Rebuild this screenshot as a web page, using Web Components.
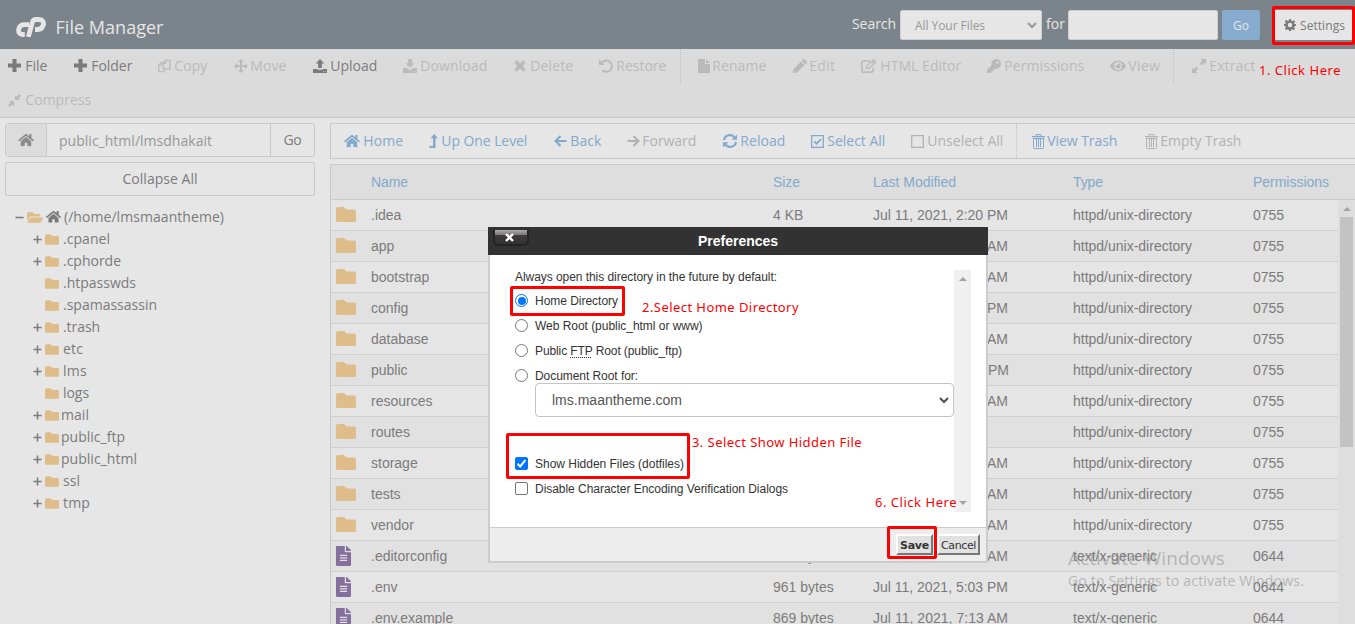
<!DOCTYPE html>
<html lang="en">
<head>
<meta charset="utf-8">
<title>File Manager</title>
<style>
html,body{margin:0;height:100%;overflow:hidden;background:#e6e6e6}
body{font-family:"Open Sans","Noto Sans",sans-serif;font-size:14px;color:#7b7b7b}
</style>
</head>
<body>
<file-manager></file-manager>
<script>
const define = (name, css, html, extra) => customElements.define(name, class extends HTMLElement {
  connectedCallback() {
    if (this.shadowRoot) return;
    const root = this.attachShadow({mode: 'open'});
    const body = typeof html === 'function' ? html(this) : html;
    root.innerHTML = `<style>*{box-sizing:border-box}${css}</style>${body}`;
    if (extra) extra(this, root);
  }
});

/* Icons: [viewBox, markup] */
const S = (w, d) => `<path fill="none" stroke="currentColor" stroke-width="${w}" d="${d}"/>`;
const P = d => `<path fill-rule="evenodd" d="${d}"/>`;
const ICONS = {
  plus: ['0 0 14 14', P('M4.500 0h4v4.500H13v4H8.500V13h-4V8.500H0v-4h4.500z')],
  tplus: ['0 0 10 10', S(1.7, 'M5 .5v9M.5 5h9')],
  tminus: ['0 0 10 10', S(1.7, 'M.5 5h9')],
  copy: ['0 0 14 14', S(1.3, 'M5.3 3.4H3.2L.8 6v7.2h6V11M3.3 3.4V6H.8M8.3.8H13v9.4H5.6V3.6L8.3.8v3H5.6')],
  move: ['0 0 14 14', P('M7 0l3 3H8v3h3V4l3 3-3 3V8H8v3h2l-3 3-3-3h2V8H3v2L0 7l3-3v2h3V3H4z')],
  upload: ['0 0 14 14', P('M7 0l4.3 4.5H8.8V9H5.2V4.5H2.7zM0 10h4.4v.8h5.2V10H14v4H0zM10 12.2h.8v.9H10zM12 12.2h.8v.9H12z')],
  download: ['0 0 14 14', P('M5.2 0h3.6v4.3h2.6L7 8.8 2.6 4.3h2.6zM0 9h3.8L7 11.8 10.200 9H14v5H0zM10 12.200h.8v.9H10zM12 12.200h.8v.9H12z')],
  times: ['0 0 12 12', S(3.4, 'M1.5 1.500l9 9M10.500 1.500l-9 9')],
  undo: ['0 0 14 14', S(2, 'M2.300 4.600A5.600 5.600 0 1 1 3.300 11.200') + P('M0 .3V6h5.700z')],
  file: ['0 0 12 14', P('M1 0h6v5h5v8.500q0 .5-.5.5H1q-1 0-1-.5V.7Q0 0 1 0zM8 0l4 4H8z')],
  pencil: ['0 0 512 512', P('M497.9 142.1l-46.1 46.1c-4.7 4.7-12.3 4.7-17 0l-111-111c-4.7-4.7-4.7-12.3 0-17l46.1-46.1c18.7-18.7 49.1-18.7 67.9 0l60.1 60.1c18.8 18.7 18.8 49.1 0 67.9zM284.2 99.8L21.6 362.4.4 483.9c-2.9 16.4 11.4 30.6 27.8 27.8l121.5-21.3 262.6-262.6c4.7-4.7 4.7-12.3 0-17l-111-111c-4.8-4.7-12.4-4.7-17.1 0z')],
  edit: ['0 0 16 14', S(1.6, 'M9 2H2.300Q.9 2 .9 3.400v8.300q0 1.400 1.400 1.400h8.400q1.400 0 1.400-1.400V9') + S(1.4, 'M5.500 9.500l.4-2.700L12.400.9l2.300 2.300-6.300 6zM11 2.500l2.200 2.200')],
  key: ['0 0 512 512', P('M512 176.001C512 273.203 433.202 352 336 352c-11.22 0-22.19-1.062-32.827-3.069l-24.012 27.014A23.999 23.999 0 0 1 261.223 384H224v40c0 13.255-10.745 24-24 24h-40v40c0 13.255-10.745 24-24 24H24c-13.255 0-24-10.745-24-24v-78.059c0-6.365 2.529-12.47 7.029-16.971l161.802-161.802C163.108 213.814 160 195.271 160 176 160 78.798 238.797.001 335.999 0 433.488-.001 512 78.511 512 176.001zM336 128c0 26.51 21.49 48 48 48s48-21.49 48-48-21.49-48-48-48-48 21.49-48 48z')],
  eye: ['0 0 576 512', P('M572.52 241.4C518.29 135.59 410.93 64 288 64S57.68 135.64 3.48 241.41a32.35 32.35 0 0 0 0 29.19C57.71 376.41 165.07 448 288 448s230.32-71.64 284.52-177.41a32.35 32.35 0 0 0 0-29.19zM288 400a144 144 0 1 1 144-144 143.93 143.93 0 0 1-144 144zm0-240a95.31 95.31 0 0 0-25.31 3.79 47.85 47.85 0 0 1-66.9 66.9A95.78 95.78 0 1 0 288 160z')],
  expand: ['0 0 14 14', P('M8.500 0H14v5.500l-1.800-1.800L9.500 6.400 7.600 4.500l2.700-2.700zM5.500 14H0V8.500l1.800 1.800 2.700-2.700 1.900 1.900-2.700 2.700z')],
  compress: ['0 0 14 14', P('M7.600 6.400V1.200l1.700 1.700L12.200 0 14 1.800l-2.900 2.900 1.700 1.700zM6.400 7.600v5.200l-1.700-1.700L1.800 14 0 12.200l2.900-2.900-1.700-1.700z')],
  home: ['0 0 576 512', P('M280.37 148.26L96 300.11V464a16 16 0 0 0 16 16l112.06-.29a16 16 0 0 0 15.92-16V368a16 16 0 0 1 16-16h64a16 16 0 0 1 16 16v95.64a16 16 0 0 0 16 16.05L464 480a16 16 0 0 0 16-16V300L295.67 148.26a12.19 12.19 0 0 0-15.3 0zM571.6 251.47L488 182.56V44.05a12 12 0 0 0-12-12h-56a12 12 0 0 0-12 12v72.61L318.47 43a48 48 0 0 0-61 0L4.34 251.47a12 12 0 0 0-1.6 16.9l25.5 31A12 12 0 0 0 45.15 301l235.22-193.74a12.19 12.19 0 0 1 15.3 0L530.9 301a12 12 0 0 0 16.9-1.6l25.5-31a12 12 0 0 0-1.7-16.93z')],
  levelup: ['0 0 9 14', P('M5.200 0L9 4.200H6.500V14H.8L0 12h4V4.200H1.500z')],
  left: ['0 0 13 12', S(2.200, 'M12.500 6H2M6.500 1L1.600 6l4.900 5')],
  right: ['0 0 13 12', S(2.200, 'M.5 6H11M6.500 1l4.900 5-4.900 5')],
  sync: ['0 0 14 14', S(2.200, 'M1 6.200A6 6 0 0 1 11.800 3.600M13 7.800A6 6 0 0 1 2.200 10.400') + P('M14 .5v5.300H8.700zM0 13.500V8.200h5.300z')],
  checked: ['0 0 13 13', S(1.3, 'M.7.7h11.600v11.600H.7z') + S(1.7, 'M3.200 6.300l2.400 2.400L10 4.200')],
  square: ['0 0 13 13', S(1.3, 'M.7.7h11.600v11.600H.7z')],
  trash: ['0 0 13 15', S(1, 'M4 2V.6h5V2M1.500 4.500v9q0 1 1 1h8q1 0 1-1v-9M4.500 5v8M6.500 5v8M8.500 5v8') + P('M0 2h13v1.300H0zM1 4h11v1H1z')],
  cog: ['0 0 14 14', P('M5.900 0h2.200l.4 2 1.200.5 1.800-1.200 1.500 1.500-1.200 1.800.5 1.300 1.700.3v1.900l-1.800.5-.5 1.200 1.300 1.800-1.600 1.500-1.700-1.200-1.200.5L8.100 14H5.900l-.4-1.600-1.200-.5-1.800 1.200L1 11.500l1.200-1.700-.5-1.200L0 8.100V5.900l1.700-.4.5-1.200L1 2.600 2.500 1l1.800 1.300L5.500 2zM7 4.400A2.600 2.600 0 1 0 7 9.600 2.600 2.600 0 0 0 7 4.400z')],
  folder: ['0 64 512 384', P('M464 128H272l-64-64H48C21.49 64 0 85.49 0 112v288c0 26.51 21.49 48 48 48h416c26.51 0 48-21.49 48-48V176c0-26.51-21.49-48-48-48z')],
  folderopen: ['0 64 576 384', P('M572.694 292.093L500.27 416.248A63.997 63.997 0 0 1 444.989 448H45.025c-18.523 0-30.064-20.093-20.731-36.093l72.424-124.155A64 64 0 0 1 152 256h399.964c18.523 0 30.064 20.093 20.73 36.093zM152 224h328v-48c0-26.51-21.49-48-48-48H272l-64-64H48C21.49 64 0 85.49 0 112v278.046l69.077-118.418C86.214 242.25 117.989 224 152 224z')],
  filealt: ['0 0 384 512', P('M224 136V0H24C10.7 0 0 10.7 0 24v464c0 13.3 10.7 24 24 24h336c13.3 0 24-10.7 24-24V160H248c-13.2 0-24-10.8-24-24zm64 236c0 6.600-5.400 12-12 12H108c-6.600 0-12-5.400-12-12v-8c0-6.600 5.400-12 12-12h168c6.600 0 12 5.400 12 12v8zm0-64c0 6.600-5.400 12-12 12H108c-6.600 0-12-5.400-12-12v-8c0-6.600 5.400-12 12-12h168c6.600 0 12 5.400 12 12v8zm0-72v8c0 6.600-5.400 12-12 12H108c-6.600 0-12-5.400-12-12v-8c0-6.600 5.400-12 12-12h168c6.600 0 12 5.400 12 12zm96-114.100v6.100H256V0h6.100c6.400 0 12.500 2.500 17 7l97.900 98c4.500 4.500 7 10.600 7 16.900z')],
  chevron: ['0 0 10 7', S(2.200, 'M1 1l4 4 4-4')],
  logo: ['0 0 30 20', S(4.8, 'M13.200 7.600H8.200Q4.200 7.600 2.900 11.500Q1.600 16.700 6.200 17.500H8.800') + S(4.8, 'M12.300 20L16.200 5.800Q17 2.500 20 2.500h3.200q5.200.6 4.100 5.500-1.300 4.500-5.500 4.500h-2.800')],
  up: ['0 0 8 4', P('M0 4l4-4 4 4z')],
  down: ['0 0 8 4', P('M0 0l4 4 4-4z')]
};
define('ui-icon', `:host{display:inline-flex;flex:none}svg{display:block;fill:currentColor}`, el => {
  const [vb, m] = ICONS[el.getAttribute('name')];
  return `<svg width="${el.getAttribute('w')}" height="${el.getAttribute('h')}" viewBox="${vb}">${m}</svg>`;
});

/* Single line of text, tracked to an optional target width */
define('ui-text', `:host{display:inline-block;white-space:pre;flex:none}`, `<span><slot></slot></span>`, (el, root) => {
  const w = +el.getAttribute('w');
  if (!w) return;
  const have = root.querySelector('span').getBoundingClientRect().width;
  el.style.letterSpacing = ((w - have) / el.textContent.length).toFixed(4) + 'px';
});

const icon = (n, w, h) => `<ui-icon name="${n}" w="${w}" h="${h}"></ui-icon>`;
const text = (t, w = 0) => `<ui-text w="${w}">${t}</ui-text>`;

define('tool-item', `:host{display:flex;align-items:center;flex:none;height:100%;color:#7b7b7b}
:host([off]){color:#bababa}:host([blue]){color:#83a9cc}:host([blue][off]){color:#b2b2b2}
:host([sep]){border-right:1px dotted #c0c0c0}
ui-text{margin:-2px 0 0 -.7px}
.i{flex:none;display:flex}`, el => {
  const g = k => el.getAttribute(k);
  return `<span class="i" style="width:${g('gap')}px">${icon(g('icon'), g('iw'), g('ih'))}</span>${text(g('label'), g('tw'))}`;
}, el => { el.style.width = el.getAttribute('width') + 'px'; });

/* [icon, iw, ih, icon x, text x, text end, label, flags, item end] */
const tools = (list) => list.map(([n, iw, ih, x, tx, te, label, flags, end]) =>
  `<tool-item icon="${n}" iw="${iw}" ih="${ih}" gap="${tx - x}" tw="${te - tx}" width="${end - x}" label="${label}" ${flags}></tool-item>`).join('');

define('app-header', `:host{display:flex;height:49px;background:#7c848b;color:#e6e6e6;padding-left:16px}
.brand{display:flex;align-items:center;gap:9.500px;font-size:18px;width:837px;padding-top:5px}
.tools{display:flex;padding-top:10px;height:40px;align-items:center}
.box{height:30px;background:#e6e6e6;border:1px solid #cfcfcf;border-radius:2px;color:#999;font-size:12px;display:flex;align-items:center}
.sel{width:142px;margin:0 4px 0 4px;padding:0 4px 0 14px;justify-content:space-between}
.inp{width:150px;margin:0 4px 0 3px}.go{width:38px;background:#87abcf;border-color:#87abcf;color:#e6e6e6;justify-content:center}
.lab{padding-bottom:3px}
.set{width:82px;margin-left:13px;padding-left:11px;color:#7b7b7b;gap:4px;border:0}`,
`<div class="brand">${icon('logo', 30, 20)}${text('File Manager', 108)}</div>
<div class="tools"><span class="lab">${text('Search', 44)}</span><div class="box sel">${text('All Your Files', 70)}${icon('chevron', 10, 7)}</div>
<span class="lab">${text('for', 19)}</span><div class="box inp"></div><div class="box go">${text('Go', 16)}</div>
<div class="box set">${icon('cog', 12, 12)}${text('Settings', 45)}</div></div>`);

define('main-toolbar', `:host{display:block;height:69px;background:#dbdbdb;border-bottom:1px solid #c6c6c6;padding-left:8px}
.r{display:flex;height:34px}`,
`<div class="r">${tools([
['plus',14,14,8,26,48,'File','',74],['plus',14,14,74,92,133,'Folder','',158],['copy',13,14,158,175,208,'Copy','off',234],
['move',14,14,234,251,287,'Move','off',313],['upload',14,14,313,331,378,'Upload','',403],['download',14,14,403,421,488,'Download','off',514],
['times',12,12,514,531,574,'Delete','off',599],['undo',14,14,599,617,667,'Restore','off sep',681]
])}<span style="width:17px"></span>${tools([
['file',12,14,698,713,767,'Rename','off',793],['pencil',14,14,793,810,836,'Edit','off',861],['edit',16,14,861,881,962,'HTML Editor','off',987],
['key',14,14,987,1005,1085,'Permissions','off',1110],['eye',16,14,1110,1129,1161,'View','off sep',1174]])}<span style="width:18px"></span>${tools([
['expand',14,14,1192,1210,1256,'Extract','off',1260]])}</div>
<div class="r">${tools([['compress',13,13,8,26,92,'Compress','off',100]])}</div>`);

const TREE = [['+','.cpanel',47,63],['+','.cphorde',58,63],['','.htpasswds',73,63],['','.spamassassin',94,63],['+','.trash',37,63],
['+','etc',20,63],['+','lms',24,63],['','logs',26,63],['+','mail',28,61],['+','public_ftp',64,61],['+','public_html',76,61],['+','ssl',17,63],['+','tmp',27,63]];
define('directory-tree', `:host{display:block;width:330px;padding:5px 0 0 5px;flex:none}
.path{display:flex;width:310px;height:34px;border:1px solid #c9c9c9;border-radius:3px}
.path>*{display:flex;align-items:center}
.h{width:41px;background:#dcdcdc;border-right:1px solid #c9c9c9;justify-content:center;color:#8b8b8b}
.p{flex:1;padding-left:12px;color:#969696}.g{width:44px;border-left:1px solid #c9c9c9;justify-content:center}
ui-text{margin-top:-2px}.p ui-text{margin-top:0}
.c{width:310px;height:34px;margin-top:5px;border:1px solid #c9c9c9;border-radius:2px;display:flex;align-items:center;justify-content:center;margin-bottom:10px}
.row{height:22px;display:flex;align-items:center}.e{width:12px;display:flex}.f{color:#dfbd8a;display:flex}`,
`<div class="path"><span class="h">${icon('home',16,14)}</span><span class="p">${text('public_html/lmsdhakait',153)}</span><span class="g">${text('Go',18)}</span></div>
<div class="c">${text('Collapse All',75)}</div>
<div class="row" style="padding-left:10px"><span class="e">${icon('tminus',9,9)}</span><span class="f" style="width:19px">${icon('folderopen',16,11)}</span><span style="width:18px;display:flex">${icon('home',15,13.5)}</span>${text('(/home/lmsmaantheme)',160)}</div>
${TREE.map(([e,t,w,x]) => `<div class="row" style="padding-left:28px"><span class="e">${e ? icon('tplus',9,9) : ''}</span><span class="f" style="width:${x-45}px">${icon('folder',14,11)}</span>${text(t,w)}</div>`).join('')}`);

define('nav-toolbar', `:host{display:flex;height:36px;border:1px solid #c9c9c9;border-right:0;padding-left:13px}`,
`${tools([['home',16,14,344,364,404,'Home','blue',429],['levelup',9,14,429,442,528,'Up One Level','blue',554],['left',13,12,554,571,602,'Back','blue',627],
['right',13,12,627,643,697,'Forward','blue off',723],['sync',14,14,723,741,786,'Reload','blue',811],['checked',13,13,811,828,886,'Select All','blue',911],
['square',13,13,911,928,1004,'Unselect All','blue off sep',1017]])}<span style="width:15px"></span>${tools([
['trash',13,15,1032,1048,1118,'View Trash','blue',1145],['trash',13,15,1145,1161,1242,'Empty Trash','blue off',1250]])}`);

define('file-row', `:host{display:grid;grid-template-columns:40px 402px 100px 200px 180px 1fr;height:31px;border-bottom:1px solid #cfcfcf;align-items:center;background:#e5e5e5}
:host([odd]){background:#e1e1e1}.i{padding-left:5px;display:flex;margin-top:-1px}`, el => {
  const [n, s, d, t, p, dw] = el.getAttribute('cells').split('|');
  const file = t[0] === 't';
  return `<span class="i" style="color:${file ? '#846f9d' : '#dfbd8a'}">${file ? icon('filealt',15,20) : icon('folder',20,15)}</span>
  ${text(n)}${text(s)}${text(d, dw)}${text(t, file ? 84 : 119)}${text(p, 31)}`;
});
const ROWS = [['.idea','4 KB','Jul 11, 2021, 2:20 PM'],['app','4 KB','Jul 11, 2021, 7:13 AM'],['bootstrap','4 KB','Jul 11, 2021, 7:13 AM'],
['config','4 KB','Jul 11, 2021, 5:03 PM'],['database','4 KB','Jul 11, 2021, 7:13 AM'],['public','4 KB','Jul 11, 2021, 5:03 PM',136],['resources','4 KB','Jul 11, 2021, 7:13 AM'],
['routes','4 KB','Jul 11, 2021'],['storage','4 KB','Jul 11, 2021, 7:13 AM'],['tests','4 KB','Jul 11, 2021, 7:13 AM'],['vendor','4 KB','Jul 11, 2021, 7:13 AM'],
['.editorconfig','213 bytes','Jul 11, 2021, 7:13 AM'],['.env','961 bytes','Jul 11, 2021, 5:03 PM'],['.env.example','869 bytes','Jul 11, 2021, 7:13 AM']];
define('file-table', `:host{display:block;margin-top:5px;border:1px solid #c9c9c9;border-right:0;border-bottom:0;height:460px;overflow:hidden;font-family:"Liberation Sans",Arial,sans-serif}
.head{display:grid;grid-template-columns:40px 402px 100px 200px 180px 1fr;height:35px;align-items:center;background:#dedede;border-bottom:1px solid #c9c9c9;color:#83a9cc}
.body{display:flex}.rows{width:1007px}.sb{flex:1;background:#dedede;display:flex;flex-direction:column;align-items:center;color:#a5a5a5;padding-top:7px}
.thumb{margin-top:6px;width:13px;height:230px;background:#c3c3c3}`,
`<div class="head"><span></span>${text('Name',37)}${text('Size',27)}${text('Last Modified',83)}${text('Type',30)}${text('Permissions',76)}</div>
<div class="body"><div class="rows">${ROWS.map(([n,s,d,w],i) => `<file-row ${i%2?'odd':''} cells="${n}|${s}|${d}|${i>10?'text/x-generic|0644':'httpd/unix-directory|0755'}|${d.length<15?0:(w||135)}"></file-row>`).join('')}</div>
<div class="sb">${icon('up',8,4)}<div class="thumb"></div></div></div>`);

define('choice-row', `:host{display:flex;align-items:center;height:25px}
::slotted(ui-text){margin-top:2px}
.m{width:13px;height:13px;border:1px solid #767676;background:#fff;margin-right:7px;flex:none;border-radius:2px;display:flex;align-items:center;justify-content:center}
.radio{border-radius:50%}.radio.on{border-color:#0075ff}.radio.on::after{content:"";width:8px;height:8px;flex:none;border-radius:50%;background:#0075ff}
.check.on{background:#0075ff;border-color:#0075ff}`, el => {
  const k = el.getAttribute('kind'), on = el.hasAttribute('on');
  return `<span class="m ${k} ${on ? 'on' : ''}">${k === 'check' && on ? '<svg width="11" height="11" viewBox="0 0 11 11"><path d="M1.500 5.800l2.700 2.700L9.300 2.200" fill="none" stroke="#fff" stroke-width="2"/></svg>' : ''}</span><slot></slot>`;
});

define('preferences-dialog', `:host{position:absolute;left:488px;top:227px;width:500px;height:336px;display:flex;flex-direction:column;background:#fff;color:#333;font:12px/15px "Liberation Sans",Arial,sans-serif}
.t{height:28px;background:#323232;color:#fff;font-weight:bold;font-size:14px;display:flex;align-items:center;justify-content:center;position:relative}
.x{position:absolute;left:5px;top:3px;width:36px;height:16px;border:2px solid #202527;border-top:0;border-radius:0 0 5px 5px;background:linear-gradient(#aaa,#777 5px,#403c3b 5px,#343130);display:flex;align-items:center;justify-content:center;color:#fff;padding-right:3px}
.b{flex:1;border:solid #ccc;border-width:0 2px;padding:15px 15px 0 25px;display:flex}
.l{width:439px}
.intro{height:18px}
.sel{margin:-5px 0 0 20px;width:419px;height:34px;border:1px solid #c4c4c4;border-radius:4px;padding:0 4px 0 16px;display:flex;align-items:center;justify-content:space-between;font-size:14px;color:#555}
.s{width:17px;height:242px;background:#f0f0f0;display:flex;flex-direction:column;align-items:center;justify-content:space-between;padding:7px 0;color:#a3a3a3}
.f{height:36px;border:2px solid #ccc;border-top-width:1px;background:#ededed;display:flex;justify-content:flex-end;padding:6px 6px 0 0;gap:4px;font:11px/15px "DejaVu Sans",sans-serif}
.btn{height:21px;border:2px solid;border-color:#fff #777 #777 #fff;background:#e1e1e1;display:flex;align-items:center;justify-content:center;padding-top:2px}
abbr{text-decoration:underline dotted #333;text-underline-offset:2px}`,
`<div class="t"><span class="x"><svg width="9" height="9" viewBox="0 0 9 9"><path d="M1 1l7 7M8 1L1 8" stroke="#fff" stroke-width="2.400"/></svg></span>${text('Preferences',80)}</div>
<div class="b"><div class="l"><div class="intro">${text('Always open this directory in the future by default:',262)}</div>
<choice-row kind="radio" on>${text('Home Directory',83)}</choice-row>
<choice-row kind="radio">${text('Web Root (public_html or www)',167.5)}</choice-row>
<choice-row kind="radio">${text('Public <abbr>FTP</abbr> Root (public_ftp)',147)}</choice-row>
<choice-row kind="radio">${text('Document Root for:',103)}</choice-row>
<div class="sel">${text('lms.maantheme.com',130)}${icon('chevron',10,7)}</div>
<div style="height:34px"></div>
<choice-row kind="check" on>${text('Show Hidden Files (dotfiles)',149)}</choice-row>
<choice-row kind="check">${text('Disable Character Encoding Verification Dialogs',253)}</choice-row></div>
<div class="s">${icon('up',8,4)}${icon('down',8,4)}</div></div>
<div class="f"><span class="btn" style="width:37px;font-weight:bold">${text('Save',29)}</span><span class="btn" style="width:43px">${text('Cancel',35)}</span></div>`);

define('call-out', `:host{position:absolute;border:3px solid #fe0000;border-radius:2px}`, '', el => {
  const [x,y,w,h] = el.getAttribute('box').split(' ');
  el.style.cssText = `left:${x}px;top:${y}px;width:${w}px;height:${h}px;box-sizing:border-box`;
});
define('call-note', `:host{position:absolute;font:13px/16px "Noto Sans","Open Sans",sans-serif;color:#fe0000}`, el => text(el.getAttribute('label'), el.getAttribute('w')), el => {
  const [x,y] = el.getAttribute('at').split(' ');
  el.style.left = x + 'px'; el.style.top = y + 'px';
});

define('file-manager', `:host{display:block;position:relative;width:1355px;height:624px;overflow:hidden}
.m{display:flex}.r{flex:1;padding-top:5px;min-width:0}
.wm{position:absolute;left:1068px;top:546px;color:rgba(140,140,140,.55);font-size:14px;line-height:20px}
.wm div:first-child{font-size:19px;line-height:25px}`,
`<app-header></app-header><main-toolbar></main-toolbar>
<div class="m"><directory-tree></directory-tree><div class="r"><nav-toolbar></nav-toolbar><file-table></file-table></div></div>
<div class="wm"><div>${text('Activate Windows',157)}</div><div>${text('Go to Settings to activate Windows.',236)}</div></div>
<preferences-dialog></preferences-dialog>
<call-out box="1272 6 83 39"></call-out><call-out box="510 286 115 30"></call-out><call-out box="506 433 184 46"></call-out><call-out box="887 526 50 33"></call-out>
<call-note at="1259 62" w="82" label="1. Click Here"></call-note><call-note at="642 299" w="157" label="2.Select Home Directory"></call-note>
<call-note at="692 434" w="170" label="3. Select Show Hidden File"></call-note><call-note at="875 494" w="82" label="6. Click Here"></call-note>`);
</script>
</body>
</html>
